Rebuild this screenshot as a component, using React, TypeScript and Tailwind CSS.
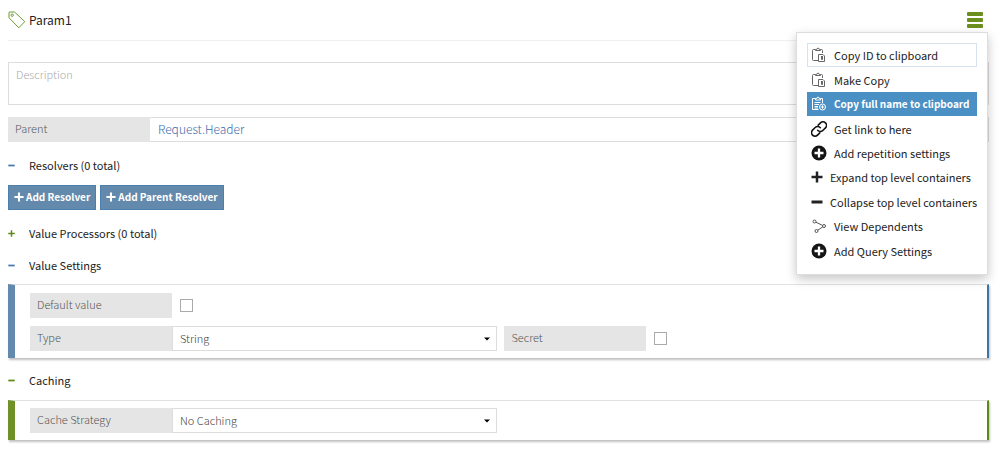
import { ReactNode, useState } from 'react'

function TagIcon() {
  return (
    <svg className="w-[18px] h-[18px]" viewBox="0 0 18 18" fill="none" stroke="#6f9a30" strokeWidth="1">
      <path d="M1 1.500Q1 1 1.500 1H6.500L16.800 10.600 10.800 16.800 1 6.800Z" strokeLinejoin="round" />
      <circle cx="4.200" cy="4.200" r="1.200" />
    </svg>
  )
}

function ClipboardIcon() {
  return (
    <svg className="w-4 h-4 shrink-0" viewBox="0 0 16 16" fill="none" stroke="#666" strokeWidth="1">
      <path d="M4.500 2.500H2.500q-1 0-1 1v9q0 1 1 1h4.500M9.500 2.500h1q1 0 1 1v2.500M4.500 3.500v-1h1.200a1.300 1.300 0 0 1 2.600 0h1.200v1Z" />
      <path d="M7.500 7.500h4.500l1.500 1.500v5.500h-6zM10.500 9v3.500h1V9" />
    </svg>
  )
}

function ClipboardAddIcon() {
  return (
    <svg className="w-4 h-4 shrink-0" viewBox="0 0 16 16" fill="none" stroke="#fff" strokeWidth="1">
      <path d="M4.500 2.500H1.500v11h6M9.500 2.500h2v4.500M4.500 4v-1.500h1.200a1.300 1.300 0 0 1 2.600 0h1.200v1.500Z" />
      <path d="M3.500 6.500h6M3.500 8.500h4.500M3.500 10.500h3.500M3.500 12h3.500" />
      <circle cx="11.500" cy="11" r="3" />
      <path d="M11.500 9.300v3.400M9.800 11h3.400" />
    </svg>
  )
}

function LinkIcon() {
  return (
    <svg className="w-4 h-4 shrink-0" viewBox="0 0 24 24" fill="none" stroke="#111" strokeWidth="2.300" strokeLinecap="round">
      <path d="M10 14a5.300 5.300 0 0 0 7.700.3l4-4a5.300 5.300 0 0 0-7.500-7.500L10.800 6.200" />
      <path d="M14 10a5.300 5.300 0 0 0-7.700-.3l-4 4a5.300 5.300 0 0 0 7.500 7.500l3.400-3.400" />
    </svg>
  )
}

function CirclePlusIcon() {
  return (
    <svg className="w-4 h-4 shrink-0" viewBox="0 0 16 16" fill="none">
      <circle cx="8" cy="8" r="7.500" fill="#151515" />
      <path d="M8 3.500v9M3.500 8h9" stroke="#fff" strokeWidth="2.300" />
    </svg>
  )
}

function DependentsIcon() {
  return (
    <svg className="w-4 h-4 shrink-0" viewBox="0 0 16 16" fill="none" stroke="#555" strokeWidth="1">
      <circle cx="3.500" cy="3.500" r="1.500" />
      <circle cx="13" cy="8" r="1.500" />
      <circle cx="5.500" cy="13" r="1.500" />
      <path d="M4.900 4.200 11.600 7.400M11.800 8.900 6.800 12.200" />
    </svg>
  )
}

function PlusIcon({ className }: { className: string }) {
  return (
    <svg className={className} viewBox="0 0 12 12" fill="none" stroke="currentColor" strokeWidth="2.500">
      <path d="M6 0.500v11M0.500 6h11" />
    </svg>
  )
}

function MinusIcon({ className }: { className: string }) {
  return (
    <svg className={className} viewBox="0 0 12 12" fill="none" stroke="currentColor" strokeWidth="3">
      <path d="M0.500 6h11" />
    </svg>
  )
}

const menuItems = [
  { icon: <ClipboardIcon />, label: 'Copy ID to clipboard', style: 'border border-[#d6e2ee] px-[3px]' },
  { icon: <ClipboardIcon />, label: 'Make Copy', style: 'px-1' },
  { icon: <ClipboardAddIcon />, label: 'Copy full name to clipboard', style: 'px-1 bg-[#4a90c4] text-white text-[10px] font-bold' },
  { icon: <LinkIcon />, label: 'Get link to here', style: 'px-1' },
  { icon: <CirclePlusIcon />, label: 'Add repetition settings', style: 'px-1' },
  { icon: <PlusIcon className="w-3 h-3 shrink-0" />, label: 'Expand top level containers', style: 'px-1' },
  { icon: <MinusIcon className="w-3 h-3 shrink-0" />, label: 'Collapse top level containers', style: 'px-1' },
  { icon: <DependentsIcon />, label: 'View Dependents', style: 'px-1' },
  { icon: <CirclePlusIcon />, label: 'Add Query Settings', style: 'px-1' },
]

function SectionHeader({ icon, title }: { icon: ReactNode; title: string }) {
  return (
    <button type="button" className="flex h-8 w-full items-center pb-0.5 text-left text-[#222]">
      <span className="w-[21px]">{icon}</span>
      {title}
    </button>
  )
}

function FieldLabel({ htmlFor, children }: { htmlFor: string; children: ReactNode }) {
  return (
    <label htmlFor={htmlFor} className="flex h-[25px] w-[142px] shrink-0 items-center bg-[#e5e5e5] px-[7px] pb-[3px] font-light text-[#555]">
      {children}
    </label>
  )
}

function SelectField({ id, options }: { id: string; options: string[] }) {
  return (
    <div className="grid w-[34%] items-center">
      <select id={id} className="col-start-1 row-start-1 h-[25px] w-full appearance-none border border-[#ddd] bg-white px-[7px] pb-0.5 font-light text-[#444]">
        {options.map(o => <option key={o}>{o}</option>)}
      </select>
      <svg className="pointer-events-none col-start-1 row-start-1 mr-[7px] h-1 w-1.5 justify-self-end" viewBox="0 0 6 4">
        <path d="M0 .5h6L3 3.500Z" fill="#000" />
      </svg>
    </div>
  )
}

function Checkbox({ id }: { id: string }) {
  return <input id={id} type="checkbox" className="ml-2 h-[13px] w-[13px] shrink-0 appearance-none border border-[#aaa] bg-white checked:bg-[#6089b0]" />
}

export default function App() {
  const [menuOpen, setMenuOpen] = useState(true)

  return (
    <div className="pb-3 pl-2 pr-[11px] font-['Noto_Sans_CJK_SC','Noto_Sans',sans-serif] text-[11px] leading-4">
      {/* Header */}
      <header className="relative flex h-[41px] items-center justify-between border-b border-[#f0f0f0]">
        <h1 className="flex items-center gap-[3px] text-[12px] text-[#222]"><TagIcon /> Param1</h1>
        <button type="button" aria-label="Menu" aria-expanded={menuOpen} onClick={() => setMenuOpen(!menuOpen)} className="mr-1.5">
          <svg className="h-4 w-4" viewBox="0 0 16 16" fill="#69901f">
            <rect width="16" height="4" rx="1" />
            <rect y="6" width="16" height="4" rx="1" />
            <rect y="12" width="16" height="4" rx="1" />
          </svg>
        </button>
        {menuOpen && (
          <ul className="absolute right-px top-8 z-10 grid h-[243px] w-48 auto-rows-fr grid-cols-1 border border-[#ddd] bg-white px-[10px] pb-[11px] pt-[10px] text-[#222] shadow-[0_4px_10px_rgba(0,0,0,0.22)]">
            {menuItems.map(item => (
              <li key={item.label} className="grid">
                <button type="button" className={`flex items-center gap-[7px] whitespace-nowrap text-left ${item.style}`}>
                  {item.icon}
                  {item.label}
                </button>
              </li>
            ))}
          </ul>
        )}
      </header>

      {/* General */}
      <textarea aria-label="Description" placeholder="Description" className="mt-[21px] block h-[43px] w-full resize-none border border-[#ddd] px-[7px] py-[3px] font-light placeholder:text-[#aaa]" />
      <div className="mt-3 flex">
        <FieldLabel htmlFor="parent">Parent</FieldLabel>
        <div className="flex h-[25px] grow items-center border border-l-0 border-[#ddd] px-2 pb-0.5">
          <a id="parent" href="#parent" className="text-[12px] font-light text-[#3c6cab]">Request.Header</a>
        </div>
      </div>

      {/* Resolvers */}
      <div className="mt-2">
        <SectionHeader icon={<MinusIcon className="h-[7px] w-[7px] text-[#4579a8]" />} title="Resolvers (0 total)" />
      </div>
      <div className="mt-[3px] flex gap-1">
        {['Add Resolver', 'Add Parent Resolver'].map(label => (
          <button key={label} type="button" className="flex h-[25px] items-center gap-0.5 border border-[#4d7fad] bg-[#6389ad] px-[5px] pb-0.5 text-[10px] font-bold text-white">
            <PlusIcon className="h-[10px] w-[10px]" />
            {label}
          </button>
        ))}
      </div>

      <div className="mt-2">
        <SectionHeader icon={<PlusIcon className="h-[7px] w-[7px] text-[#5c8a14]" />} title="Value Processors (0 total)" />
        <SectionHeader icon={<MinusIcon className="h-[7px] w-[7px] text-[#4579a8]" />} title="Value Settings" />
      </div>
      <section className="mt-0.5 flex flex-col gap-2 border-l-[7px] border-r-2 border-t border-l-[#6389ad] border-r-[#3d76a5] border-t-[#e2e2e2] pb-[7px] pl-[15px] pt-2 shadow-[1px_2px_2px_rgba(0,0,0,0.25)]">
        <div className="flex items-center">
          <FieldLabel htmlFor="default-value">Default value</FieldLabel>
          <Checkbox id="default-value" />
        </div>
        <div className="flex items-center">
          <FieldLabel htmlFor="type">Type</FieldLabel>
          <SelectField id="type" options={['String', 'Number', 'Boolean']} />
          <div className="ml-[7px] flex items-center">
            <FieldLabel htmlFor="secret">Secret</FieldLabel>
            <Checkbox id="secret" />
          </div>
        </div>
      </section>

      {/* Caching */}
      <div className="mt-[7px]">
        <SectionHeader icon={<MinusIcon className="h-[7px] w-[7px] text-[#5c8a14]" />} title="Caching" />
      </div>
      <section className="mt-[3px] flex items-center border-l-[7px] border-r-2 border-t border-l-[#6f9127] border-r-[#5c8a14] border-t-[#e2e2e2] py-[7px] pl-[15px] shadow-[1px_2px_2px_rgba(0,0,0,0.25)]">
        <FieldLabel htmlFor="cache">Cache Strategy</FieldLabel>
        <SelectField id="cache" options={['No Caching', 'Memory']} />
      </section>
    </div>
  )
}
